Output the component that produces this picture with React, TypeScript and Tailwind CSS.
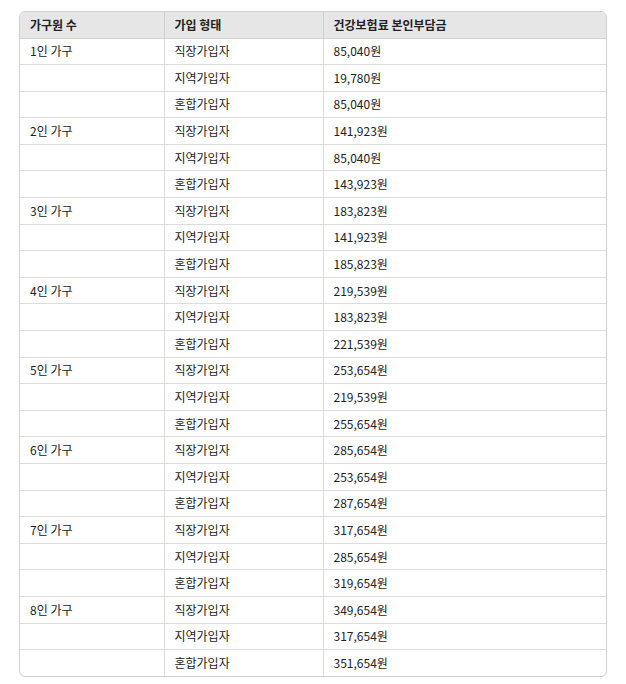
const groups = [
  { label: '1인 가구', values: ['85,040원', '19,780원', '85,040원'] },
  { label: '2인 가구', values: ['141,923원', '85,040원', '143,923원'] },
  { label: '3인 가구', values: ['183,823원', '141,923원', '185,823원'] },
  { label: '4인 가구', values: ['219,539원', '183,823원', '221,539원'] },
  { label: '5인 가구', values: ['253,654원', '219,539원', '255,654원'] },
  { label: '6인 가구', values: ['285,654원', '253,654원', '287,654원'] },
  { label: '7인 가구', values: ['317,654원', '285,654원', '319,654원'] },
  { label: '8인 가구', values: ['349,654원', '317,654원', '351,654원'] },
];

const types = ['직장가입자', '지역가입자', '혼합가입자'];

export default function App() {
  const rows = groups.flatMap((g) =>
    g.values.map((v, i) => ({ label: i === 0 ? g.label : '', type: types[i], value: v }))
  );

  return (
    <div className="bg-white min-h-[684px] pt-[11px] pl-[19px]">
      <div
        className="w-[588px] border border-[#d0d0d0] rounded-[6px] overflow-hidden text-[12px] text-[#222]"
        style={{ fontFamily: '"Noto Sans CJK KR", "Noto Sans", sans-serif' }}
      >
        <table className="w-full border-collapse table-fixed">
          <colgroup>
            <col className="w-[144px]" />
            <col className="w-[159px]" />
            <col />
          </colgroup>
          <thead>
            <tr className="bg-[#e6e6e6] h-[26px]">
              <th className="text-left font-bold px-[10px] border-r border-b border-[#d0d0d0]">가구원 수</th>
              <th className="text-left font-bold px-[10px] border-r border-b border-[#d0d0d0]">가입 형태</th>
              <th className="text-left font-bold px-[10px] border-b border-[#d0d0d0]">건강보험료 본인부담금</th>
            </tr>
          </thead>
          <tbody>
            {rows.map((r, i) => {
              const last = i === rows.length - 1;
              return (
                <tr key={i} className="h-[26.6px]">
                  <td className={`px-[10px] border-r border-[#dcdcdc] ${last ? '' : 'border-b'}`}>{r.label}</td>
                  <td className={`px-[10px] border-r border-[#dcdcdc] ${last ? '' : 'border-b'}`}>{r.type}</td>
                  <td className={`px-[10px] border-[#dcdcdc] ${last ? '' : 'border-b'}`}>{r.value}</td>
                </tr>
              );
            })}
          </tbody>
        </table>
      </div>
    </div>
  );
}
